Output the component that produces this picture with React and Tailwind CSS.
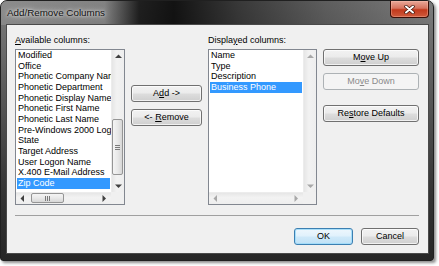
import React from "react";

const font = { fontFamily: '"Liberation Sans", Arial, sans-serif' };

function Arrow({ dir, disabled }) {
  const c = disabled ? "#a8a8a8" : "#404040";
  const pts = {
    up: "0,4 3.5,0.5 7,4",
    down: "0,0.5 3.5,4 7,0.5",
    left: "4,0 0.5,3.5 4,7",
    right: "0.5,0 4,3.5 0.5,7",
  }[dir];
  const vertical = dir === "up" || dir === "down";
  return (
    <svg width={vertical ? 7 : 5} height={vertical ? 5 : 7} viewBox={vertical ? "0 0 7 5" : "0 0 5 7"}>
      <polygon points={pts} fill={c} />
    </svg>
  );
}

function VScroll({ disabled }) {
  return (
    <div className="w-[13px] h-full flex flex-col bg-[linear-gradient(to_right,#e6e6e6,#f2f2f2_40%,#eeeeee)] border-l border-[#ececec]">
      <div className="h-[12px] flex items-center justify-center">
        <Arrow dir="up" disabled={disabled} />
      </div>
      <div className="flex-1 relative">
        {!disabled && (
          <div className="absolute left-[0px] right-[1px] top-[57px] h-[56px] rounded-[2px] border border-[#959595] bg-[linear-gradient(to_right,#f4f4f4,#e9e9e9_50%,#d7d7d7)] flex flex-col items-center justify-center gap-[1px]">
            <div className="w-[5px] h-[1px] bg-[#7a7a7a]" />
            <div className="w-[5px] h-[1px] bg-[#7a7a7a]" />
            <div className="w-[5px] h-[1px] bg-[#7a7a7a]" />
          </div>
        )}
      </div>
      <div className="h-[12px] flex items-center justify-center">
        <Arrow dir="down" disabled={disabled} />
      </div>
    </div>
  );
}

function HScroll({ disabled }) {
  return (
    <div className="h-[12px] flex flex-1 bg-[linear-gradient(to_bottom,#e6e6e6,#f2f2f2_40%,#eeeeee)] border-t border-[#ececec]">
      <div className="w-[13px] flex items-center justify-center">
        <Arrow dir="left" disabled={disabled} />
      </div>
      <div className="flex-1 relative">
        {!disabled && (
          <div className="absolute top-0 bottom-[1px] left-[2px] w-[33px] rounded-[2px] border border-[#959595] bg-[linear-gradient(to_bottom,#f4f4f4,#e9e9e9_50%,#d7d7d7)] flex items-center justify-center gap-[1px]">
            <div className="w-[1px] h-[5px] bg-[#7a7a7a]" />
            <div className="w-[1px] h-[5px] bg-[#7a7a7a]" />
            <div className="w-[1px] h-[5px] bg-[#7a7a7a]" />
          </div>
        )}
      </div>
      <div className="w-[13px] flex items-center justify-center">
        <Arrow dir="right" disabled={disabled} />
      </div>
    </div>
  );
}

function ListBox({ items, selected, width, disabledScroll }) {
  return (
    <div className="h-[156px] border border-[#828790] bg-white flex flex-col" style={{ width }}>
      <div className="flex h-[142px]">
        <div className="flex-1 overflow-hidden pt-0 pl-[1px] pr-[1px]">
          {items.map((it) => (
            <div
              key={it}
              className={`h-[10.67px] leading-[10.67px] pl-[1px] whitespace-nowrap text-[9px] ${
                it === selected ? "bg-[#3399ff] text-white" : "text-black"
              }`}
            >
              {it}
            </div>
          ))}
        </div>
        <VScroll disabled={disabledScroll} />
      </div>
      <div className="flex">
        <HScroll disabled={disabledScroll} />
        <div className="w-[13px] h-[12px] bg-[#f0f0f0]" />
      </div>
    </div>
  );
}

function Btn({ children, w, disabled, def, className = "" }) {
  let cls =
    "border-[#707070] bg-[linear-gradient(to_bottom,#f2f2f2_0%,#ebebeb_48%,#dddddd_52%,#cfcfcf_100%)] text-black shadow-[inset_0_0_0_1px_rgba(255,255,255,0.7)]";
  if (disabled)
    cls = "border-[#adb2b5] bg-[#f4f4f4] text-[#8a8a8a]";
  if (def)
    cls =
      "border-[#3c7fb1] bg-[linear-gradient(to_bottom,#eef7fd_0%,#e0f1fc_48%,#cfe9f9_52%,#bfe1f6_100%)] text-black shadow-[inset_0_0_0_1px_rgba(160,220,250,0.9)]";
  return (
    <div
      className={`h-[17px] rounded-[3px] border flex items-center justify-center text-[9px] whitespace-pre ${cls} ${className}`}
      style={{ width: w }}
    >
      {children}
    </div>
  );
}

const U = ({ children }) => <span className="underline underline-offset-[1px]">{children}</span>;

export default function App() {
  const available = [
    "Modified",
    "Office",
    "Phonetic Company Name",
    "Phonetic Department",
    "Phonetic Display Name",
    "Phonetic First Name",
    "Phonetic Last Name",
    "Pre-Windows 2000 Logon Name",
    "State",
    "Target Address",
    "User Logon Name",
    "X.400 E-Mail Address",
    "Zip Code",
  ];
  const displayed = ["Name", "Type", "Description", "Business Phone"];

  return (
    <div className="w-[439px] h-[266px] bg-white overflow-hidden" style={font}>
      <div className="w-[434px] h-[261px] rounded-t-[7px] rounded-b-[3px] border border-[#202020] bg-[linear-gradient(to_bottom,#7d7d7d_0%,#5a5a5a_35%,#333333_75%,#262626_100%)] shadow-[2px_2px_3px_rgba(0,0,0,0.45)] flex flex-col overflow-hidden">
        {/* Title bar */}
        <div className="h-[24px] flex items-start bg-[linear-gradient(to_right,rgba(150,150,150,0.6)_0%,rgba(140,140,140,0.4)_24%,rgba(0,0,0,0.75)_32%,rgba(0,0,0,0.85)_40%,rgba(0,0,0,0.55)_55%,rgba(0,0,0,0.25)_75%,rgba(0,0,0,0)_100%)]">
          <div className="pl-[6px] pt-[5px] text-[9.8px] text-[#111] [text-shadow:0_0_6px_rgba(255,255,255,0.9),0_0_3px_rgba(255,255,255,0.8)]">
            Add/Remove Columns
          </div>
          <div className="flex-1" />
          <div className="mr-[4px] w-[39px] h-[17px] rounded-b-[4px] border border-t-0 border-[#3b0d05] bg-[linear-gradient(to_bottom,#e9a899_0%,#d6735e_45%,#c2391c_55%,#cf5a3c_100%)] flex items-center justify-center shadow-[inset_0_0_0_1px_rgba(255,200,180,0.35)]">
            <svg width="11" height="9" viewBox="0 0 11 9">
              <path d="M2 1.5 L9 7.5 M9 1.5 L2 7.5" stroke="#3a1208" strokeWidth="3.4" strokeLinecap="round" />
              <path d="M2 1.5 L9 7.5 M9 1.5 L2 7.5" stroke="#ffffff" strokeWidth="2" strokeLinecap="round" />
            </svg>
          </div>
        </div>
        {/* Client area */}
        <div className="ml-[6px] mr-[5px] h-[228px] bg-[#f0f0f0] shadow-[0_0_0_1px_#4a4a4a] flex flex-col">
          <div className="flex pl-[8px] pt-[10px]">
            <div className="flex flex-col w-[110px]">
              <div className="h-[14px] text-[9px] leading-[11px] text-black">
                <U>A</U>vailable columns:
              </div>
              <ListBox items={available} selected="Zip Code" width={110} />
            </div>
            <div className="ml-[6px] flex flex-col pt-[50px] gap-[7px]">
              <Btn w={71}>
                A<U>d</U>d {"->"}
              </Btn>
              <Btn w={71}>
                {"<- "}<U>R</U>emove
              </Btn>
            </div>
            <div className="ml-[6px] flex flex-col w-[109px]">
              <div className="h-[14px] text-[9px] leading-[11px] text-black">
                Displa<U>y</U>ed columns:
              </div>
              <ListBox items={displayed} selected="Business Phone" width={109} disabledScroll />
            </div>
            <div className="ml-[6px] flex flex-col pt-[14px]">
              <Btn w={96}>
                M<U>o</U>ve Up
              </Btn>
              <Btn w={96} disabled className="mt-[7px]">
                Mo<U>v</U>e Down
              </Btn>
              <Btn w={96} className="mt-[15px]">
                Re<U>s</U>tore Defaults
              </Btn>
            </div>
          </div>
          <div className="mt-[10px] ml-[8px] mr-[9px] h-[1px] bg-[#a0a0a0]" />
          <div className="mt-[12px] flex justify-end pr-[9px] gap-[8px]">
            <Btn w={59} def>
              OK
            </Btn>
            <Btn w={58}>Cancel</Btn>
          </div>
        </div>
      </div>
    </div>
  );
}
